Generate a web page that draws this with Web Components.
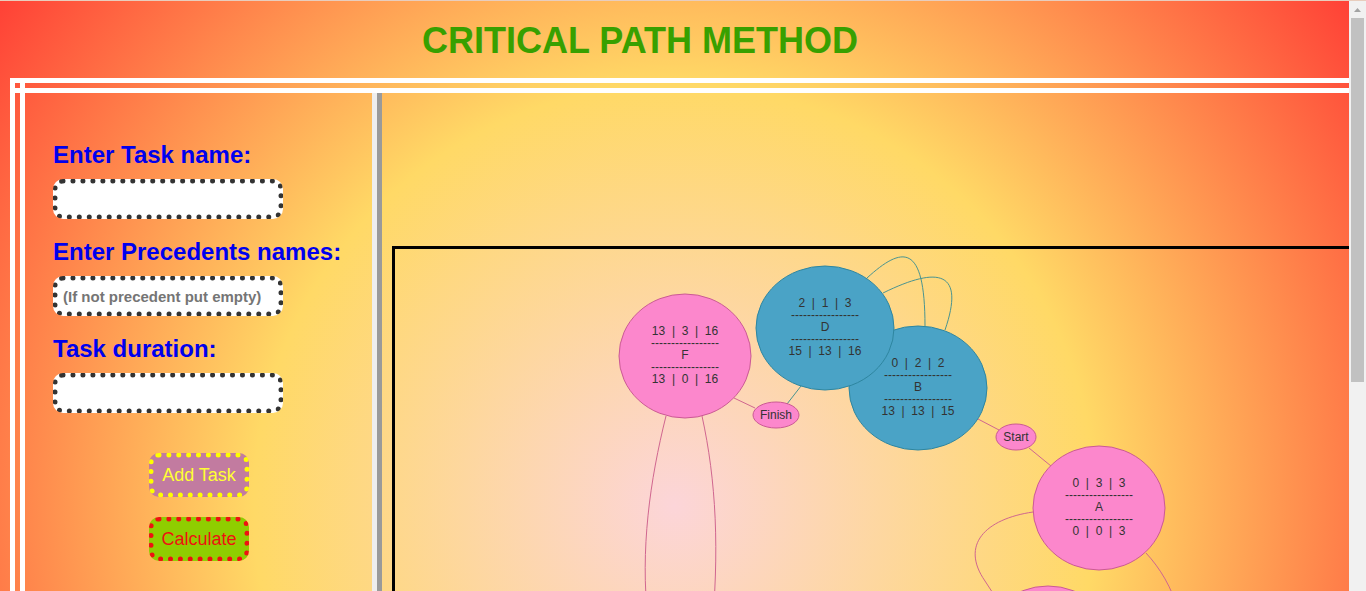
<!DOCTYPE html>
<html lang="en">
<head>
<meta charset="utf-8">
<title>Critical Path Method</title>
<style>
html, body { margin: 0; height: 100%; }
body { font-family: "Liberation Sans", Arial, sans-serif; overflow: hidden; }
</style>
</head>
<body>
<cpm-app></cpm-app>
<script>
const define = (name, html, setup) => customElements.define(name, class extends HTMLElement {
  constructor() {
    super();
    this.attachShadow({ mode: "open" }).innerHTML = html;
  }
  connectedCallback() { if (setup) setup(this, this.shadowRoot); }
});

define("task-field", `
<style>
:host { display: block; }
label { display: block; font-size: 24px; line-height: 28px; font-weight: bold; color: #00e; white-space: nowrap; }
input { display: block; box-sizing: border-box; width: 230px; height: 40px; margin-top: 10px; padding: 0 5px; background: #fff; border: 5px dotted #333; border-radius: 10px; font: bold 15px "Liberation Sans", Arial, sans-serif; outline: 0; }
input::placeholder { color: #757575; }
</style>
<label for="box"></label><input id="box" type="text">`, (el, root) => {
  root.querySelector("label").textContent = el.getAttribute("label");
  root.querySelector("input").placeholder = el.getAttribute("hint") || "";
});

define("dotted-button", `
<style>
:host { display: block; }
button { display: block; box-sizing: border-box; width: 100px; height: 44px; padding: 0; border: 5px dotted var(--edge); border-radius: 10px; background: var(--fill); color: var(--ink); font: 18px "Liberation Sans", Arial, sans-serif; white-space: nowrap; }
</style>
<button type="button"><slot></slot></button>`);

define("task-form", `
<style>
:host { display: block; box-sizing: border-box; flex: none; width: 357px; padding: 48px 0 0 28px; border-right: 10px ridge #eee; }
form { display: flex; flex-direction: column; gap: 19px; }
.actions { display: flex; flex-direction: column; gap: 20px; padding: 21px 0 0 96px; }
.add { --fill: #c27ba0; --edge: #ff0; --ink: #ff3; }
.calc { --fill: #8fce00; --edge: #e11; --ink: #e11; }
</style>
<form>
<task-field label="Enter Task name:"></task-field>
<task-field label="Enter Precedents names:" hint="(If not precedent put empty)"></task-field>
<task-field label="Task duration:"></task-field>
<div class="actions">
<dotted-button class="add">Add Task</dotted-button>
<dotted-button class="calc">Calculate</dotted-button>
</div>
</form>`);

define("task-graph", `
<style>
:host { display: block; box-sizing: border-box; border: 3px solid #000; overflow: hidden; }
svg { display: block; width: 1194px; height: 640px; font-family: "Liberation Sans", Arial, sans-serif; font-size: 12px; text-anchor: middle; fill: #333; }
.pink { fill: #fc87cc; stroke: #cb5a94; }
.blue { fill: #4aa3c6; stroke: #2e86a0; }
.edge { fill: none; stroke: #d0668f; }
.edge.teal { stroke: #4a9490; }
text { white-space: pre; }
</style>
<svg viewBox="395 249 1194 640" role="img" aria-label="Task graph">
<g class="edges">
<path class="edge teal" d="M867 278C902 246 925 242 925 326M883 293C940 265 965 272 945 330M801 386L787 404"/>
<path class="edge" d="M734 398L755 408M666 416C650 480 640 550 648 620M702 416C716 480 720 550 711 640M978 419L999 430M1029 448L1051 466M1033 512C985 519 960 545 985 581L1000 604M1146 553C1160 568 1172 588 1178 610"/>
</g>
<g id="nodes"></g>
</svg>`, (el, root) => {
  const nodes = [
    [918, 388, 69, 62, "blue", ["0  |  2  |  2", "B", "13  |  13  |  15"]],
    [825, 328, 69, 62, "blue", ["2  |  1  |  3", "D", "15  |  13  |  16"]],
    [685, 356, 66, 62, "pink", ["13  |  3  |  16", "F", "13  |  0  |  16"]],
    [1099, 508, 66, 62, "pink", ["0  |  3  |  3", "A", "0  |  0  |  3"]],
    [776, 415, 23, 13, "pink", ["Finish"]],
    [1016, 437, 20, 13, "pink", ["Start"]],
    [1048, 648, 66, 62, "pink", []]
  ];
  const rule = "-----------------";
  root.getElementById("nodes").innerHTML = nodes.map(([x, y, rx, ry, tone, t]) => {
    const rows = t.length === 3 ? [t[0], rule, t[1], rule, t[2]] : t;
    const first = rows.length === 5 ? y - 21 : y + 4;
    return `<ellipse class="${tone}" cx="${x}" cy="${y}" rx="${rx}" ry="${ry}"/>` +
      rows.map((r, i) => `<text x="${x}" y="${first + i * 12}">${r}</text>`).join("");
  }).join("");
});

define("page-scrollbar", `
<style>
:host { display: block; flex: none; box-sizing: border-box; width: 17px; padding: 5px 2px 0; background: #f1f1f1; }
svg { display: block; width: 13px; height: 12px; }
.thumb { height: 364px; background: #c1c1c1; }
</style>
<svg viewBox="0 0 13 12"><path d="M3 6L6.5 2L10 6Z" fill="#a3a3a3"/></svg>
<div class="thumb"></div>`);

define("cpm-app", `
<style>
:host { display: flex; height: 100%; box-sizing: border-box; border-top: 1px solid #e8cdbd; }
.view { flex: 1; min-width: 0; overflow: hidden; }
.page { box-sizing: border-box; min-height: 1010px; padding: 18px 0 0 10px; background: radial-gradient(circle, #fcd5d9, #ffd966, #ff4136); }
h1 { margin: 0 79px 0 0; text-align: center; font-size: 36px; line-height: 44px; color: #38a000; }
/* the two white strips let the inner lines of the double border cross at the corner */
.frame { display: flex; box-sizing: border-box; width: 120%; margin-top: 15px; border: 15px double #fff;
  background: linear-gradient(#fff, #fff) 0 10px / 15px 5px no-repeat border-box, linear-gradient(#fff, #fff) 10px 0 / 5px 15px no-repeat border-box; }
.stage { flex: 1; min-width: 0; padding: 153px 0 10px 10px; }
</style>
<div class="view"><main class="page">
<h1>CRITICAL PATH METHOD</h1>
<div class="frame"><task-form></task-form><section class="stage"><task-graph></task-graph></section></div>
</main></div>
<page-scrollbar></page-scrollbar>`);
</script>
</body>
</html>
